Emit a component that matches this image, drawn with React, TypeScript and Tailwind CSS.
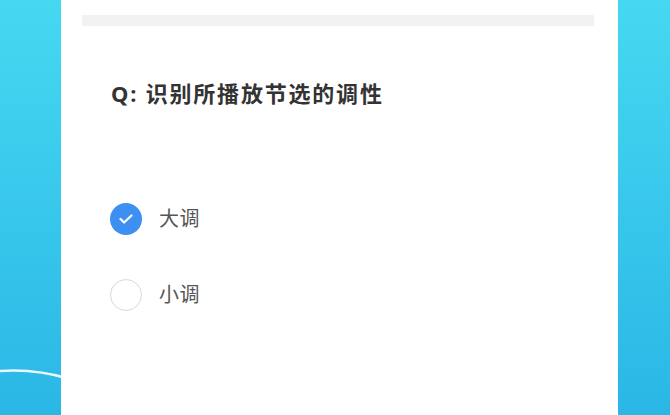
import React from "react";

function Option({ label, checked }: { label: string; checked?: boolean }) {
  return (
    <div className="flex items-center h-[32px]">
      {checked ? (
        <div className="w-[32px] h-[32px] rounded-full bg-[#3d8ff2] flex items-center justify-center">
          <svg width="14" height="10" viewBox="0 0 14 10" fill="none">
            <path d="M1.5 5l3.6 3.5L12.5 1.5" stroke="white" strokeWidth="2.2" strokeLinecap="round" strokeLinejoin="round" />
          </svg>
        </div>
      ) : (
        <div className="w-[32px] h-[32px] rounded-full border border-[#d9d9d9] bg-white" />
      )}
      <span className="ml-[17px] text-[20px] text-[#555] leading-none tracking-[0.5px]">{label}</span>
    </div>
  );
}

export default function App() {
  return (
    <div
      className="relative w-[670px] h-[415px] overflow-hidden flex bg-gradient-to-b from-[#46d8f1] to-[#2ab7e6]"
      style={{ fontFamily: '"Noto Sans", "Noto Sans CJK SC", sans-serif' }}
    >
      <svg className="absolute left-0 top-0" width="670" height="415" viewBox="0 0 670 415">
        <path d="M-10 372 Q30 367 70 379" stroke="white" strokeOpacity="0.9" strokeWidth="2.5" fill="none" />
      </svg>
      <div className="relative ml-[61px] w-[557px] h-full bg-white flex flex-col">
        <div className="mt-[15px] ml-[21px] mr-[24px] h-[11px] bg-[#f2f2f2]" />
        <div className="pl-[50px] pt-[52px] text-[22px] font-bold text-[#333] leading-[30px] tracking-[1.8px]">
          Q: 识别所播放节选的调性
        </div>
        <div className="pl-[49px] pt-[95px] flex flex-col gap-[44px]">
          <Option label="大调" checked />
          <Option label="小调" />
        </div>
      </div>
    </div>
  );
}
